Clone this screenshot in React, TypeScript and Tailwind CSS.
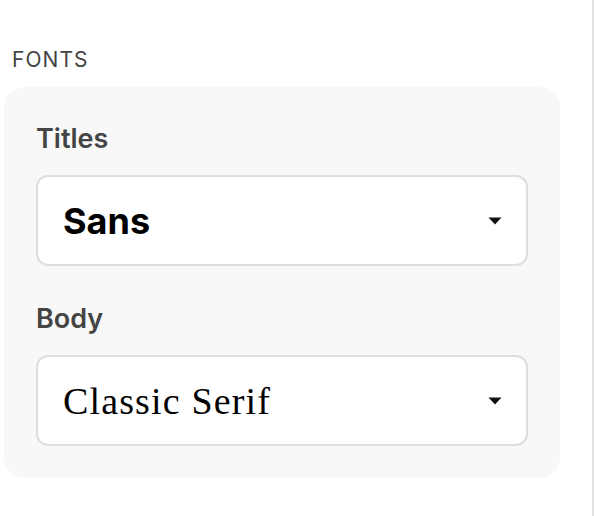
import React from 'react'

// ─────────────────────────────────────────────────────────────
// Fonts settings panel — Titles / Body selects
// ─────────────────────────────────────────────────────────────

function Caret() {
  return (
    <svg width="14" height="8" viewBox="0 0 14 8" className="shrink-0">
      <path d="M0.5 0.5 H13.5 L7 7.5 Z" fill="#111" />
    </svg>
  )
}

interface FontSelectProps {
  label: string
  value: string
  valueClass: string
}

function FontSelect({ label, value, valueClass }: FontSelectProps) {
  return (
    <div className="flex flex-col">
      <span className="text-[27px] leading-none font-semibold text-[#444] font-['Inter',sans-serif] mb-[23px]">
        {label}
      </span>
      <div className="h-[91px] flex items-center justify-between pl-[25px] pr-[24px] bg-white border-2 border-[#dedede] rounded-[12px]">
        <span className={valueClass}>{value}</span>
        <Caret />
      </div>
    </div>
  )
}

export default function App() {
  return (
    <div className="w-[594px] h-[516px] bg-white border-r-2 border-[#e2e2e2]">
      <div className="pl-[12px] pt-[49px] text-[21px] leading-none tracking-[0.05em] text-[#444] font-['Inter',sans-serif]">
        FONTS
      </div>

      <div className="ml-[4px] mt-[17px] w-[556px] rounded-[20px] bg-[#f8f8f8] px-[32px] pt-[38px] pb-[32px] flex flex-col gap-[39px]">
        <FontSelect
          label="Titles"
          value="Sans"
          valueClass="text-[36px] leading-none font-bold text-black font-['Inter',sans-serif]"
        />
        <FontSelect
          label="Body"
          value="Classic Serif"
          valueClass="text-[38px] leading-none tracking-[0.03em] text-black font-['Liberation_Serif',serif]"
        />
      </div>
    </div>
  )
}
